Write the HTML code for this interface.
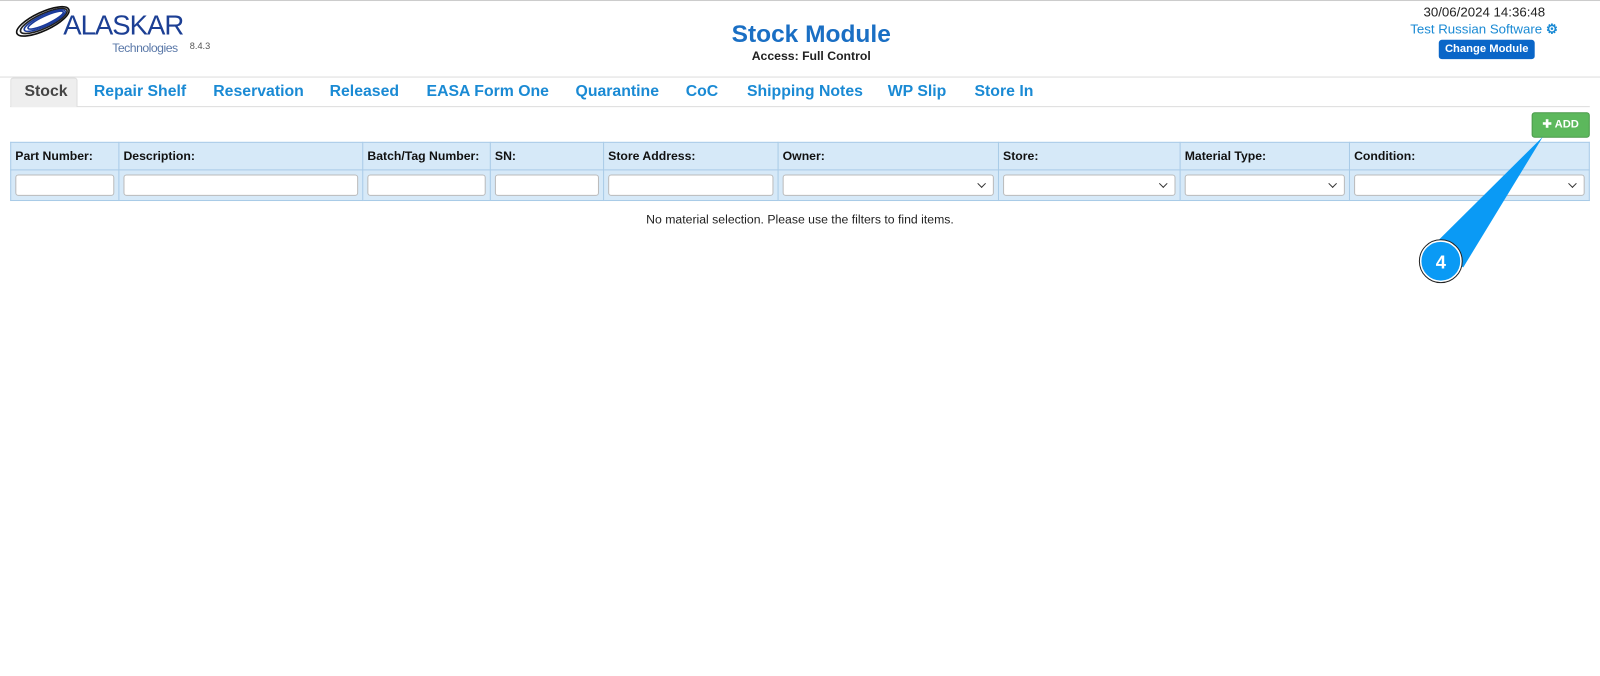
<!DOCTYPE html>
<html><head><style>
*{margin:0;padding:0;box-sizing:border-box}
body{width:1600px;height:675px;background:#fff;font-family:"Liberation Sans",Arial,sans-serif;position:relative;overflow:hidden;color:#333}
#w{position:absolute;left:0;top:0;width:1568px;height:662px;transform:scale(1.020408);transform-origin:0 0}
.a{position:absolute}
.tab{position:absolute;top:81px;font-size:15.5px;font-weight:bold;color:#1a8ad4}
th,td{border:1px solid #a9cbe7}
table{position:absolute;left:10px;top:139px;width:1548px;border-collapse:collapse;background:#d6e9f8}
th{height:27px;text-align:left;font-size:12px;color:#111;padding-left:4px;font-weight:bold}
td{height:30px;padding:0 4px}
td div{height:21px;background:#fff;border:1px solid #bbb;border-radius:3px;position:relative}
td div.s:after{content:"";position:absolute;right:8px;top:5px;width:5px;height:5px;border-right:1.5px solid #333;border-bottom:1.5px solid #333;transform:rotate(45deg)}
</style></head><body><div id="w">
<div class="a" style="left:0;top:0;width:1568px;height:1px;background:#ccc"></div>
<svg class="a" style="left:12px;top:5px" width="60" height="32" viewBox="0 0 60 32">
<g fill="none" stroke-width="1.6">
<ellipse cx="30" cy="16" rx="28" ry="9" transform="rotate(-25 30 16)" stroke="#111"/>
<ellipse cx="31" cy="16" rx="25" ry="7" transform="rotate(-25 30 16)" stroke="#222"/>
<ellipse cx="32" cy="16" rx="22" ry="5.5" transform="rotate(-25 30 16)" stroke="#1a3a9a"/>
<ellipse cx="33" cy="16" rx="19" ry="4" transform="rotate(-25 30 16)" stroke="#1a3a9a"/>
</g></svg>
<div class="a" style="left:62px;top:10px;font-size:27px;color:#1c3f94;letter-spacing:-1px">ALASKAR</div>
<div class="a" style="left:110px;top:40px;font-size:12px;color:#5a78a8;letter-spacing:-0.5px">Technologies</div>
<div class="a" style="left:186px;top:40px;font-size:9px;color:#555">8.4.3</div>
<div class="a" style="left:0;width:1590px;top:20px;text-align:center;font-size:24px;font-weight:bold;color:#1a6fc4">Stock Module</div>
<div class="a" style="left:0;width:1590px;top:48px;text-align:center;font-size:12px;font-weight:bold;color:#222">Access: Full Control</div>
<div class="a" style="left:1395px;top:4px;font-size:13px;color:#222">30/06/2024 14:36:48</div>
<div class="a" style="left:1382px;top:21px;font-size:13px;color:#1a8ad4">Test Russian Software <b style="font-size:13px">⚙</b></div>
<div class="a" style="left:1410px;top:39px;width:94px;height:19px;background:#0a66c8;border-radius:3px;color:#fff;font-size:11px;font-weight:bold;text-align:center;line-height:19px">Change Module</div>
<div class="a" style="left:0;top:75px;width:1568px;height:1px;background:#ddd"></div>
<div class="a" style="left:10px;top:104px;width:1548px;height:1px;background:#ddd"></div>
<div class="a" style="left:10px;top:76px;width:66px;height:29px;background:#eee;border:1px solid #ddd;border-bottom:none;border-radius:3px 3px 0 0"></div>
<div class="tab" style="left:24px;color:#444">Stock</div>
<div class="tab" style="left:92px">Repair Shelf</div>
<div class="tab" style="left:209px">Reservation</div>
<div class="tab" style="left:323px">Released</div>
<div class="tab" style="left:418px">EASA Form One</div>
<div class="tab" style="left:564px">Quarantine</div>
<div class="tab" style="left:672px">CoC</div>
<div class="tab" style="left:732px">Shipping Notes</div>
<div class="tab" style="left:870px">WP Slip</div>
<div class="tab" style="left:955px">Store In</div>
<div class="a" style="left:1501px;top:110px;width:57px;height:25px;background:#5cb85c;border:1px solid #4a9a4a;border-radius:3px;color:#fff;font-size:11px;font-weight:bold;text-align:center;line-height:23px">✚ ADD</div>
<table>
<tr><th style="width:106px">Part Number:</th><th style="width:239px">Description:</th><th style="width:125px">Batch/Tag Number:</th><th style="width:111px">SN:</th><th style="width:171px">Store Address:</th><th style="width:216px">Owner:</th><th style="width:178px">Store:</th><th style="width:166px">Material Type:</th><th>Condition:</th></tr>
<tr><td><div></div></td><td><div></div></td><td><div></div></td><td><div></div></td><td><div></div></td><td><div class="s"></div></td><td><div class="s"></div></td><td><div class="s"></div></td><td><div class="s"></div></td></tr>
</table>
<div class="a" style="left:0;width:1568px;top:208px;text-align:center;font-size:12px;color:#222">No material selection. Please use the filters to find items.</div>
<svg class="a" style="left:0;top:0" width="1568" height="662">
<polygon points="1512,134 1434,262 1400,245" fill="#0a9af5"/>
<circle cx="1412" cy="256" r="20" fill="#0a9af5" stroke="#fff" stroke-width="2"/>
<circle cx="1412" cy="256" r="21" fill="none" stroke="#222" stroke-width="1"/>
<text x="1412" y="263" text-anchor="middle" font-family="Liberation Sans" font-weight="bold" font-size="18" fill="#fff">4</text>
</svg>
</div></body></html>
